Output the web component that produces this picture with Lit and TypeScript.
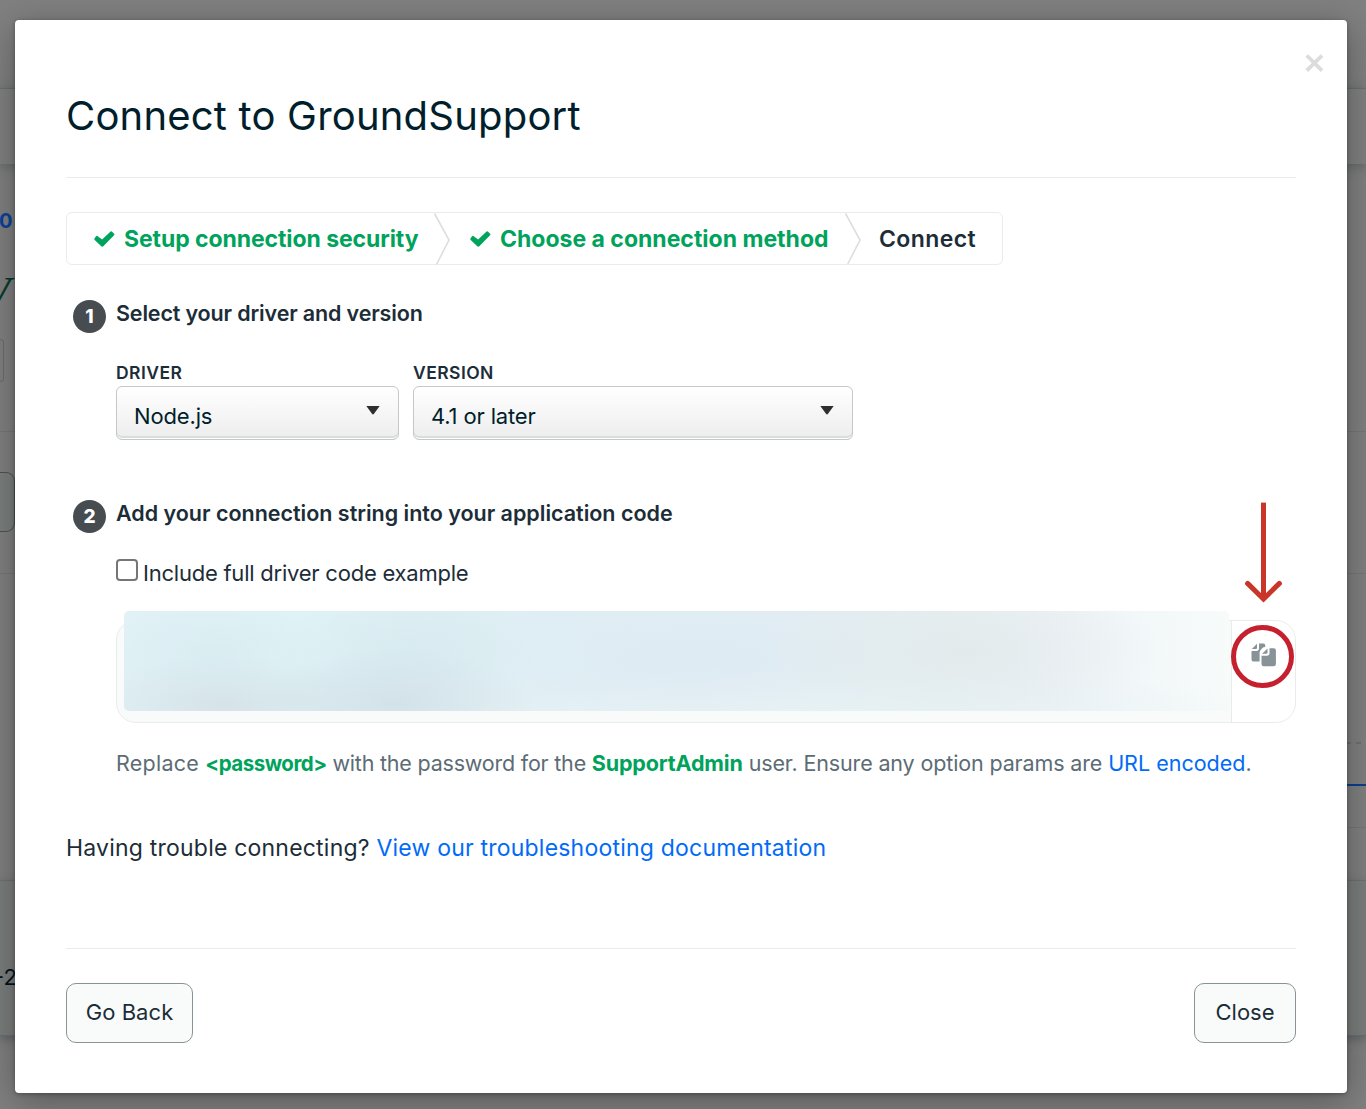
import { LitElement, html, css } from "lit";
import { customElement, property } from "lit/decorators.js";

@customElement("step-chevron")
export class StepChevron extends LitElement {
  static styles = css`
    :host { display: block; flex: none; width: 18px; height: 53px; }
    svg { display: block; }
  `;
  render() {
    return html`<svg viewBox="0 0 18 53" width="18" height="53">
      <path d="M1.5 1.5 L16 28 L3.5 52.5" fill="none" stroke="#dcdedf" stroke-width="1.6" />
    </svg>`;
  }
}

@customElement("check-mark")
export class CheckMark extends LitElement {
  static styles = css`
    :host { display: block; flex: none; width: 21px; height: 16px; }
    svg { display: block; }
  `;
  render() {
    return html`<svg viewBox="0 0 21 16" width="21" height="16">
      <path
        d="M3.4 5 L8.1 8.6 L16.6 0.6 Q17.4 0 18.1 0.7 L20.1 2.8 Q20.7 3.6 20 4.3 L9.3 15.2 Q8.3 16.1 7.3 15.2 L0.7 8.9 Q0 8.1 0.6 7.3 L2.1 5.2 Q2.7 4.5 3.4 5 Z"
        fill="#00a35c"
      />
    </svg>`;
  }
}

@customElement("select-box")
export class SelectBox extends LitElement {
  @property() label = "";
  @property() value = "";
  static styles = css`
    :host { display: block; }
    .label { height: 26px; line-height: 25px; font-size: 17.5px; font-weight: 600; letter-spacing: 0.45px; }
    .box {
      box-sizing: border-box; height: 54px; padding: 0 18px 0 17px;
      border: 1px solid #c4c8c8; border-radius: 6px;
      background: linear-gradient(#fff, #ededed);
      box-shadow: inset 0 -1px 0 #fff, inset 0 -3px 0 #d8dcdb;
      display: flex; justify-content: space-between;
      font-size: 22px; line-height: 58px; color: #001e2b; letter-spacing: -0.15px;
    }
    svg { display: block; margin-top: 18.5px; }
  `;
  render() {
    return html`<div class="label">${this.label}</div>
      <div class="box">
        <span>${this.value}</span>
        <svg viewBox="0 0 14 9" width="14" height="9"><path d="M0.3 0 H13.7 L7.8 8 Q7 8.9 6.2 8 Z" fill="#2f2f2f" /></svg>
      </div>`;
  }
}

@customElement("app-root")
export class AppRoot extends LitElement {
  static styles = css`
    :host { display: block; font-family: Inter, "Liberation Sans", sans-serif; color: #1c2d38; }
    * { box-sizing: border-box; }
    .stage { display: grid; grid-template: 1109px / 1366px; width: 1366px; height: 1109px; overflow: hidden; background: #808080; }
    .page, .dialog { grid-area: 1 / 1; min-width: 0; }

    .page { display: flex; flex-direction: column; }
    .row { flex: none; width: 1366px; border-bottom: 1px solid #757777; }
    .nav { height: 89px; }
    .subnav { height: 75px; border-bottom: 0; box-shadow: 0 2px 12px rgba(30, 50, 45, 0.35); }
    .heading { height: 268px; padding-top: 47px; }
    .crumb { height: 20px; line-height: 20px; font-size: 20px; font-weight: 700; color: #0a419b; margin-left: -1px; }
    .initial { height: 44px; margin: 40px 0 0 -18px; font: italic 46px/46px "Liberation Serif", serif; color: #063d2c; }
    .pill { width: 4px; height: 43px; margin-top: 24px; border: 1px solid #6a6d6d; border-left: 0; border-radius: 0 6px 6px 0; }
    .action { height: 142px; padding-top: 40px; }
    .action-button { width: 15px; height: 60px; border: 1px solid #4a5252; border-left: 0; border-radius: 0 9px 9px 0; background: #7b807e; }
    .dashes { height: 170px; border-bottom: 0; display: flex; justify-content: flex-end; align-items: flex-end; }
    .dash { width: 5px; height: 2px; margin-left: 5px; background: #6f7171; }
    .dash:last-child { margin-right: 5px; }
    .active, .gap { width: 683px; align-self: flex-end; }
    .active { height: 42px; border-bottom: 2px solid #0a3f8f; }
    .gap { height: 42px; }
    .gap2 { height: 53px; }
    .foot { height: 155px; background: #7a7e7c; border-bottom: 1px solid #6c7071; padding-top: 83px; font-size: 22px; line-height: 26px; color: #03141c; box-shadow: 0 3px 10px rgba(30, 40, 50, 0.35); }
    .foot-text { margin-left: -6px; }

    .dialog {
      margin: 20px 19px 16px 15px; padding: 0 51px; background: #fff; border-radius: 4px;
      box-shadow: 0 8px 36px rgba(0, 0, 0, 0.32), 0 1px 4px rgba(0, 0, 0, 0.3);
      display: flex; flex-direction: column; position: relative;
    }
    .top { display: flex; justify-content: flex-end; height: 71px; padding-top: 34px; margin-right: -28px; }
    .title { margin: 0; height: 87px; line-height: 49px; font-size: 40px; font-weight: 400; letter-spacing: 0.2px; color: #001e2b; border-bottom: 1px solid #e9ecec; }
    .steps {
      margin-top: 34px; width: 937px; height: 53px; border: 1px solid #e8edeb; border-radius: 6px;
      display: flex; align-items: center; font-size: 23px; font-weight: 700; color: #00a35c;
    }
    .steps check-mark { margin: 0 9px 0 27px; }
    .steps .second { margin-left: 19px; }
    .step1 { width: 309px; letter-spacing: -0.08px; white-space: nowrap; }
    .step2 { width: 344px; letter-spacing: 0; white-space: nowrap; }
    .step3 { margin-left: 17px; font-weight: 600; letter-spacing: 0.4px; color: #1c2d38; }
    .section { display: flex; align-items: flex-start; }
    .first { margin-top: 34px; height: 200px; }
    .num { width: 33px; height: 33px; flex: none; border-radius: 50%; background: #464c4f; color: #fff; font-size: 19px; font-weight: 800; line-height: 33px; text-align: center; margin: 1px 10px 0 7px; }
    .body { flex: 1; min-width: 0; }
    .head { height: 29px; line-height: 28px; font-weight: 600; font-size: 21.5px; letter-spacing: -0.15px; white-space: nowrap; }
    .head2 { letter-spacing: -0.01px; }
    .selects { display: flex; gap: 14px; margin-top: 32px; }
    .driver { width: 283px; }
    .version { width: 440px; }
    .include { display: flex; height: 30px; margin-top: 31px; font-size: 22px; line-height: 28px; letter-spacing: -0.23px; }
    .checkbox { width: 22px; height: 22px; margin: 0 5px 0 0; border: 2px solid #767676; border-radius: 4px; background: #fff; }
    .code { display: flex; position: relative; margin-top: 31px; height: 103px; border: 1px solid #e8edeb; border-radius: 20px; background: linear-gradient(90deg, #f9fbfa 1114px, #fff 1114px); }
    .code-main { width: 1115px; border-right: 1px solid #e8edeb; }
    .copy { flex: 1; padding: 22px 0 0 19px; }
    .redacted {
      position: absolute; left: 7px; top: -10px; width: 1105px; height: 100px; border-radius: 5px;
      background:
        radial-gradient(ellipse 140px 55px at 270px 92px, rgba(207, 221, 228, 0.75), rgba(207, 221, 228, 0)),
        radial-gradient(ellipse 150px 50px at 100px 95px, rgba(211, 223, 229, 0.75), rgba(211, 223, 229, 0)),
        radial-gradient(ellipse 110px 60px at 90px 45px, rgba(211, 233, 237, 0.55), rgba(211, 233, 237, 0)),
        radial-gradient(ellipse 130px 60px at 285px 38px, rgba(211, 231, 235, 0.6), rgba(211, 231, 235, 0)),
        radial-gradient(ellipse 190px 60px at 560px 50px, rgba(221, 233, 242, 0.6), rgba(221, 233, 242, 0)),
        radial-gradient(ellipse 200px 70px at 840px 40px, rgba(224, 232, 234, 0.6), rgba(224, 232, 234, 0)),
        radial-gradient(ellipse 480px 50px at 680px 104px, rgba(231, 242, 245, 0.95), rgba(231, 242, 245, 0)),
        linear-gradient(90deg, #e1f1f6 0, #dff2f6 180px, #dfeef4 420px, #e1edf3 650px, #e6eef0 830px, #ecf1f4 930px, #f2f7f9 1010px, #f7fbfa 1105px);
    }
    .ring { position: absolute; left: 1114px; top: 4px; width: 63px; height: 63px; border: 5px solid #c5202e; border-radius: 50%; }
    .arrow { position: absolute; left: 1127px; top: -119px; }
    .note { margin: 25px 0 0; height: 30px; font-size: 21.5px; line-height: 30px; color: #5c6c75; white-space: pre; }
    .strong { font-weight: 700; color: #00a35c; letter-spacing: -0.15px; }
    .token { font-size: 20.5px; letter-spacing: -0.5px; }
    .n1 { letter-spacing: 0.24px; }
    .n2 { letter-spacing: -0.21px; }
    .n3 { letter-spacing: -0.14px; }
    .link { color: #016bf8; }
    .trouble { margin: 54px 0 0; height: 32px; line-height: 32px; font-size: 23px; letter-spacing: 0.21px; white-space: pre; }
    .footer { margin-top: 84px; border-top: 1px solid #e9ecec; padding-top: 34px; display: flex; justify-content: space-between; }
    .button { height: 60px; border: 1px solid #889397; border-radius: 10px; background: #f9fbfa; font: 400 22px/56px Inter, sans-serif; color: #1c2d38; padding: 0 0 2px; text-align: center; }
    .back { width: 127px; letter-spacing: 0.05px; }
    .close { width: 102px; }
  `;

  render() {
    return html`<div class="stage">
      <div class="page">
        <div class="row nav"></div>
        <div class="row subnav"></div>
        <div class="row heading">
          <div class="crumb">0</div>
          <div class="initial">V</div>
          <div class="pill"></div>
        </div>
        <div class="row action"><div class="action-button"></div></div>
        <div class="row dashes"><span class="dash"></span><span class="dash"></span><span class="dash"></span></div>
        <div class="row active"></div>
        <div class="row gap"></div>
        <div class="row gap2"></div>
        <div class="row foot"><div class="foot-text">-2</div></div>
      </div>

      <div class="dialog">
        <div class="top">
          <svg viewBox="0 0 19 19" width="19" height="19"><path d="M1.8 1.5 L17 16.7 M17 1.5 L1.8 16.7" stroke="#dadcdd" stroke-width="3.8" /></svg>
        </div>
        <h1 class="title">Connect to GroundSupport</h1>
        <div class="steps">
          <check-mark></check-mark><span class="step1">Setup connection security</span><step-chevron></step-chevron>
          <check-mark class="second"></check-mark><span class="step2">Choose a connection method</span><step-chevron></step-chevron>
          <span class="step3">Connect</span>
        </div>

        <div class="section first">
          <div class="num">1</div>
          <div class="body">
            <div class="head">Select your driver and version</div>
            <div class="selects">
              <select-box class="driver" label="DRIVER" value="Node.js"></select-box>
              <select-box class="version" label="VERSION" value="4.1 or later"></select-box>
            </div>
          </div>
        </div>

        <div class="section">
          <div class="num">2</div>
          <div class="body">
            <div class="head head2">Add your connection string into your application code</div>
            <div class="include"><span class="checkbox"></span><span>Include full driver code example</span></div>
            <div class="code">
              <div class="code-main"></div>
              <div class="copy">
                <svg viewBox="0 0 26 24" width="26" height="24">
                  <g fill="#889397">
                    <path d="M0.8 6 L6 0.8 V5 Q6 6 5 6 Z" />
                    <path d="M8 0.5 H12.5 Q14.2 0.5 14.2 2.2 V4 Q12.2 4.1 11.2 5.2 L9.4 7.2 Q8.6 8.2 8.6 9.8 V18.6 H2.6 Q0.5 18.6 0.5 16.4 V7.9 H5.4 Q8 7.9 8 5.2 Z" />
                    <path d="M11.1 10.8 L16.5 5.4 V9.6 Q16.5 10.8 15.4 10.8 Z" />
                    <path d="M18.5 5.2 H22.8 Q24.9 5.2 24.9 7.4 V20.9 Q24.9 23.3 22.6 23.3 H12.7 Q10.5 23.3 10.5 20.9 V12.7 H15.9 Q18.5 12.7 18.5 10 Z" />
                  </g>
                </svg>
              </div>
              <div class="redacted"></div>
              <div class="ring"></div>
              <svg class="arrow" viewBox="0 0 40 102" width="40" height="102">
                <path d="M19.5 0.6 V97" stroke="#c93529" stroke-width="5" fill="none" />
                <path d="M3.6 81.4 L19.5 97 L35.4 81.4" stroke="#c93529" stroke-width="5" stroke-linecap="round" fill="none" />
              </svg>
            </div>
            <p class="note"><span class="n1">Replace </span><span class="strong token">&lt;password&gt;</span><span class="n2"> with the password for the </span><span class="strong">SupportAdmin</span><span class="n3"> user. Ensure any option params are </span><span class="link">URL encoded</span>.</p>
          </div>
        </div>

        <p class="trouble">Having trouble connecting? <span class="link">View our troubleshooting documentation</span></p>
        <div class="footer">
          <button class="button back">Go Back</button>
          <button class="button close">Close</button>
        </div>
      </div>
    </div>`;
  }
}
